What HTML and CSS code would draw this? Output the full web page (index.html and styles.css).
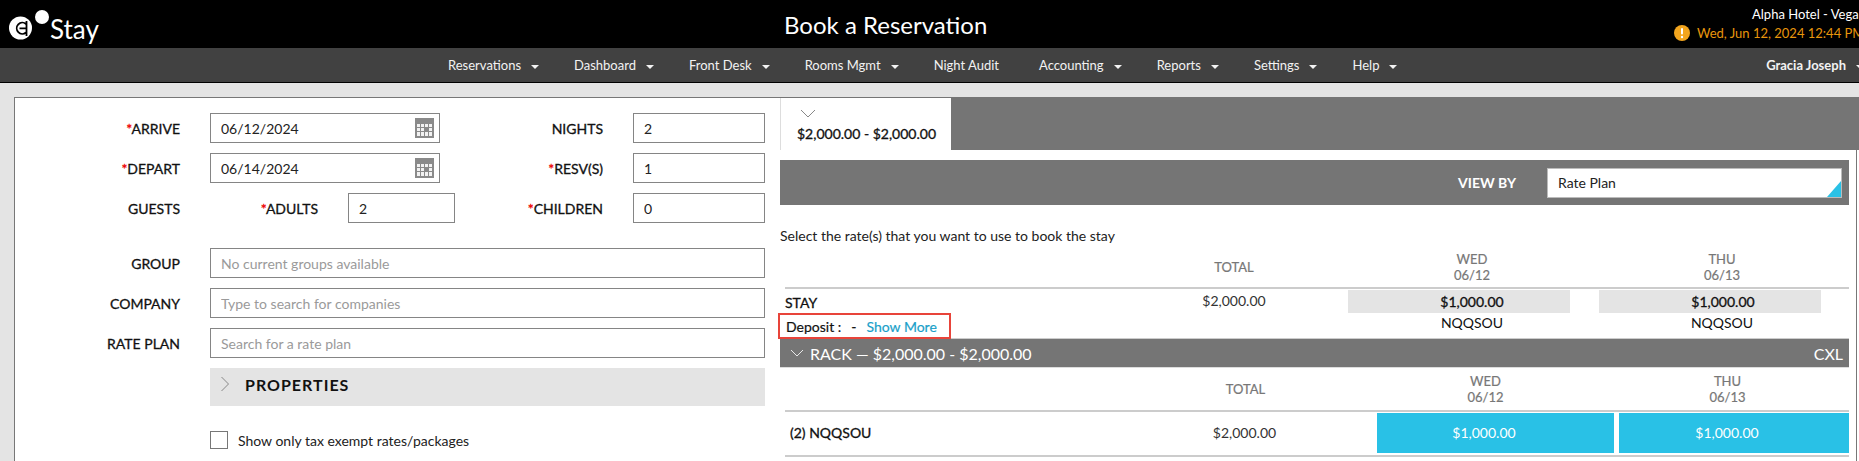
FILE: index.html
```html
<!DOCTYPE html>
<html>
<head>
    <meta charset="utf-8">
    <title>Book a Reservation</title>
    <link rel="stylesheet" href="styles.css">
</head>
<body>
    <svg class="defs" width="0" height="0">
        <symbol id="cal" viewBox="0 0 19 20">
            <rect width="19" height="20" fill="#8a8a8a"/>
            <g fill="#f2f2f2">
                <rect x="2" y="6" width="3" height="3"/><rect x="6" y="6" width="3" height="3"/><rect x="10" y="6" width="3" height="3"/><rect x="14" y="6" width="3" height="3"/>
                <rect x="2" y="10" width="3" height="3"/><rect x="6" y="10" width="3" height="3"/><rect x="14" y="10" width="3" height="3"/>
                <rect x="2" y="14" width="3" height="4"/><rect x="6" y="14" width="3" height="4"/><rect x="10" y="14" width="3" height="4"/><rect x="14" y="14" width="3" height="4"/>
            </g>
        </symbol>
    </svg>

    <header class="top">
        <div class="logo">
            <svg width="50" height="40" viewBox="0 0 50 40">
                <circle cx="20.5" cy="24" r="11.5" fill="#fff"/>
                <circle cx="42" cy="13" r="7" fill="#fff"/>
                <path d="M26 20 A5.6 5.6 0 1 0 26 28.5 M26.5 17 V32 M19.5 24.3 H26" fill="none" stroke="#000" stroke-width="1.8"/>
            </svg>
            <span class="brand">Stay</span>
        </div>
        <h1>Book a Reservation</h1>
        <div class="hotel">
            <div class="hotel-name">Alpha Hotel - Vega</div>
            <div class="hotel-date">
                <svg width="16" height="16" viewBox="0 0 16 16">
                    <circle cx="8" cy="8" r="8" fill="#f2a51e"/>
                    <rect x="7" y="3" width="2" height="6.5" rx="1" fill="#fff"/>
                    <circle cx="8" cy="12" r="1.2" fill="#fff"/>
                </svg>
                <span>Wed, Jun 12, 2024 12:44 PM</span>
            </div>
        </div>
    </header>

    <nav class="menu">
        <a class="drop">Reservations</a>
        <a class="drop">Dashboard</a>
        <a class="drop">Front Desk</a>
        <a class="drop">Rooms Mgmt</a>
        <a class="audit">Night Audit</a>
        <a class="drop">Accounting</a>
        <a class="drop">Reports</a>
        <a class="drop">Settings</a>
        <a class="drop">Help</a>
        <a class="drop user">Gracia Joseph</a>
    </nav>

    <main class="page">
        <section class="search">
            <div class="row">
                <label class="lbl req">ARRIVE</label>
                <div class="field f-date"><input value="06/12/2024"><svg class="cal"><use href="#cal"/></svg></div>
                <label class="lbl lbl-mid">NIGHTS</label>
                <div class="field f-small"><input value="2"></div>
            </div>
            <div class="row">
                <label class="lbl req">DEPART</label>
                <div class="field f-date"><input value="06/14/2024"><svg class="cal"><use href="#cal"/></svg></div>
                <label class="lbl lbl-mid req">RESV(S)</label>
                <div class="field f-small"><input value="1"></div>
            </div>
            <div class="row row-guests">
                <label class="lbl">GUESTS</label>
                <label class="lbl lbl-adults req">ADULTS</label>
                <div class="field f-adults"><input value="2"></div>
                <label class="lbl lbl-children req">CHILDREN</label>
                <div class="field f-small"><input value="0"></div>
            </div>
            <div class="row">
                <label class="lbl">GROUP</label>
                <div class="field f-wide"><input placeholder="No current groups available"></div>
            </div>
            <div class="row">
                <label class="lbl">COMPANY</label>
                <div class="field f-wide"><input placeholder="Type to search for companies"></div>
            </div>
            <div class="row">
                <label class="lbl">RATE PLAN</label>
                <div class="field f-wide"><input placeholder="Search for a rate plan"></div>
            </div>
            <div class="props">
                <svg width="10" height="16" viewBox="0 0 10 16"><path d="M1.5 1 L8.5 8 L1.5 15" fill="none" stroke="#888" stroke-width="1"/></svg>
                <span>PROPERTIES</span>
            </div>
            <div class="exempt">
                <span class="check"></span>
                <span>Show only tax exempt rates/packages</span>
            </div>
        </section>

        <section class="rates">
            <div class="tabs">
                <div class="tab">
                    <svg width="16" height="9" viewBox="0 0 16 9"><path d="M1 1 L8 8 L15 1" fill="none" stroke="#888" stroke-width="1"/></svg>
                    <div>$2,000.00 - $2,000.00</div>
                </div>
            </div>
            <div class="pane">
                <div class="viewby">
                    <span>VIEW BY</span>
                    <div class="select">Rate Plan</div>
                </div>
                <div class="hint">Select the rate(s) that you want to use to book the stay</div>

                <div class="grid stay-head">
                    <div></div>
                    <div class="th">TOTAL</div>
                    <div class="th">WED<br>06/12</div>
                    <div class="th">THU<br>06/13</div>
                </div>
                <div class="grid stay-body">
                    <div class="stay-name">
                        <div class="stay-title">STAY</div>
                        <div class="deposit">Deposit :<i>-</i><a>Show More</a></div>
                    </div>
                    <div class="total">$2,000.00</div>
                    <div class="day">
                        <div class="price">$1,000.00</div>
                        <div class="code">NQQSOU</div>
                    </div>
                    <div class="day day-2">
                        <div class="price">$1,000.00</div>
                        <div class="code">NQQSOU</div>
                    </div>
                </div>

                <div class="rack">
                    <svg width="14" height="8" viewBox="0 0 14 8"><path d="M1 1 L7 7 L13 1" fill="none" stroke="#e8e8e8" stroke-width="1"/></svg>
                    <span>RACK — $2,000.00 - $2,000.00</span>
                    <span class="cxl">CXL</span>
                </div>

                <div class="grid2 rack-head">
                    <div></div>
                    <div class="th th-total">TOTAL</div>
                    <div class="th col-a">WED<br>06/12</div>
                    <div class="th col-b">THU<br>06/13</div>
                </div>
                <div class="grid2 rack-row">
                    <div class="rate-name">(2) NQQSOU</div>
                    <div class="total">$2,000.00</div>
                    <div class="btn col-a">$1,000.00</div>
                    <div class="btn col-b">$1,000.00</div>
                </div>
            </div>
        </section>
    </main>
</body>
</html>
```

FILE: styles.css
```css
* {
    box-sizing: border-box;
}

html, body {
    height: 461px;
    overflow: hidden;
}

body {
    margin: 0;
    background-color: #e4e4e4;
    font-family: Lato, "Open Sans", sans-serif;
    font-size: 14px;
    color: #111;
}

.defs {
    position: absolute;
}

/* top bar */
.top {
    display: flex;
    align-items: center;
    height: 48px;
    background-color: #000;
    color: #fff;
}

.logo {
    flex: 0 0 784px;
    display: flex;
    align-items: center;
    height: 48px;
}

.logo svg {
    display: block;
}

.brand {
    font-size: 26px;
    margin-top: 9px;
}

.top h1 {
    margin: 0;
    font-size: 24px;
    font-weight: 400;
}

.hotel {
    margin-left: auto;
    width: 185px;
    overflow: hidden;
    white-space: nowrap;
    font-size: 13px;
}

.hotel-name {
    padding-left: 78px;
    line-height: 18px;
}

.hotel-date {
    display: flex;
    align-items: center;
    gap: 7px;
    line-height: 20px;
    color: #e8960c;
}

.hotel-date svg {
    flex: none;
}

/* menu */
.menu {
    display: flex;
    align-items: center;
    gap: 35px;
    height: 35px;
    padding-left: 448px;
    background-color: #414141;
    border-bottom: 1px solid #000;
    color: #f2f2f2;
    font-size: 13px;
    white-space: nowrap;
}

.drop::after {
    content: "";
    display: inline-block;
    margin-left: 10px;
    vertical-align: 1px;
    border-top: 4px solid #f2f2f2;
    border-left: 4px solid transparent;
    border-right: 4px solid transparent;
}

.audit {
    margin-right: 5px;
}

.user {
    margin-left: auto;
    margin-right: -5px;
    font-weight: 700;
}

/* page */
.page {
    display: flex;
    margin: 14px 0 0 14px;
    height: 364px;
}

.search {
    flex: 0 0 766px;
    padding-top: 15px;
    background-color: #fff;
    border-top: 1px solid #777;
    border-left: 1px solid #777;
}

.row {
    display: flex;
    align-items: center;
    margin-bottom: 10px;
}

.row-guests {
    margin-bottom: 25px;
}

.lbl {
    flex: 0 0 165px;
    margin-right: 30px;
    text-align: right;
    -webkit-text-stroke: 0.3px #111;
}

.req::before {
    content: "*";
    color: #e00;
    -webkit-text-stroke: 0.3px #e00;
}

.lbl-mid {
    flex-basis: 163px;
}

.lbl-adults {
    flex-basis: 108px;
}

.lbl-children {
    flex-basis: 148px;
}

.field {
    display: flex;
    align-items: center;
    height: 30px;
    background-color: #fff;
    border: 1px solid #858585;
}

.field input {
    flex: 1;
    min-width: 0;
    height: 100%;
    padding: 0 10px;
    border: 0;
    outline: 0;
    background: transparent;
    font-family: inherit;
    font-size: 14px;
    color: #222;
}

.field input::placeholder {
    color: #9a9a9a;
    opacity: 1;
}

.f-date {
    width: 230px;
}

.f-small {
    width: 132px;
}

.f-adults {
    width: 107px;
}

.f-wide {
    width: 555px;
}

.cal {
    flex: 0 0 19px;
    width: 19px;
    height: 20px;
    margin-right: 5px;
}

.props {
    display: flex;
    align-items: center;
    gap: 15px;
    width: 555px;
    height: 38px;
    margin-left: 195px;
    padding: 0 0 6px 10px;
    background-color: #e4e4e4;
    font-size: 16px;
    font-weight: 700;
    letter-spacing: 1px;
}

.exempt {
    display: flex;
    align-items: center;
    gap: 10px;
    margin: 25px 0 0 195px;
    color: #222;
}

.check {
    width: 18px;
    height: 18px;
    border: 1px solid #777;
}

/* rate side */
.rates {
    flex: 1;
    background-color: #fff;
    min-width: 0;
}

.tabs {
    height: 53px;
    padding-top: 1px;
    background-color: #757575;
}

.tab {
    width: 171px;
    height: 52px;
    padding: 11px 0 0 16px;
    background-color: #fff;
    border-left: 1px solid #ddd;
    -webkit-text-stroke: 0.3px #111;
}

.tab svg {
    display: block;
    margin: 0 0 7px 3px;
}

.pane {
    height: 311px;
    margin-right: 2px;
    padding: 10px 7px 0 0;
    border-right: 1px solid #777;
}

.viewby {
    display: flex;
    align-items: center;
    justify-content: flex-end;
    height: 45px;
    padding-right: 7px;
    background-color: #757575;
    color: #fff;
    font-weight: 700;
}

.select {
    position: relative;
    width: 295px;
    height: 30px;
    margin-left: 31px;
    padding-left: 10px;
    background-color: #fff;
    border: 1px solid #bbb;
    color: #222;
    font-weight: 400;
    line-height: 28px;
}

.select::after {
    content: "";
    position: absolute;
    right: 0;
    bottom: 0;
    border-bottom: 16px solid #29c1e6;
    border-left: 14px solid transparent;
}

.hint {
    margin-top: 21px;
    line-height: 20px;
    color: #222;
}

.grid {
    display: grid;
    grid-template-columns: 335px 228px 248px 252px;
    margin-left: 5px;
}

.grid2 {
    display: grid;
    grid-template-columns: 345px 247px 240px 232px;
    margin-left: 5px;
}

.th {
    text-align: center;
    font-size: 13px;
    line-height: 16px;
    color: #777;
    align-self: center;
    -webkit-text-stroke: 0.2px #777;
}

.stay-head {
    height: 43px;
    border-bottom: 2px solid #ccc;
}

.stay-body {
    height: 50px;
    border-bottom: 1px solid #ccc;
}

.stay-title {
    height: 24px;
    padding-top: 4px;
    line-height: 20px;
    -webkit-text-stroke: 0.3px #111;
}

.deposit {
    width: 173px;
    height: 26px;
    margin-left: -7px;
    padding-left: 6px;
    border: 2px solid #e8443a;
    line-height: 24px;
    white-space: nowrap;
    -webkit-text-stroke: 0.2px #111;
}

.deposit i {
    margin: 0 10px;
    font-style: normal;
}

.deposit a {
    color: #1a9fc9;
    -webkit-text-stroke: 0.2px #1a9fc9;
}

.total {
    padding-top: 2px;
    text-align: center;
    line-height: 20px;
    color: #333;
}

.price {
    height: 23px;
    margin: 1px 26px 0 0;
    padding-left: 26px;
    background-color: #e4e4e4;
    text-align: center;
    line-height: 23px;
    -webkit-text-stroke: 0.3px #111;
}

.day-2 .price {
    margin: 1px 27px 0 3px;
}

.code {
    text-align: center;
    line-height: 19px;
}

.rack {
    display: flex;
    align-items: center;
    height: 29px;
    padding: 0 6px 0 10px;
    background-color: #757575;
    border-bottom: 1px solid #ddd;
    color: #fff;
    font-size: 16px;
}

.rack svg {
    margin-right: 6px;
}

.cxl {
    margin-left: auto;
}

.rack-head {
    height: 44px;
    border-bottom: 2px solid #ccc;
}

.th-total {
    padding-right: 16px;
}

.rack-head .col-a {
    padding-right: 23px;
}

.rack-head .col-b {
    padding-right: 11px;
}

.rack-row {
    height: 45px;
    padding-top: 1px;
    border-bottom: 2px solid #ccc;
}

.rate-name {
    padding-left: 5px;
    line-height: 40px;
    -webkit-text-stroke: 0.3px #111;
}

.rack-row .total {
    padding: 0 18px 0 0;
    line-height: 40px;
}

.btn {
    height: 40px;
    background-color: #29c1e6;
    color: #fff;
    text-align: center;
    line-height: 40px;
}

.btn.col-a {
    margin-right: 3px;
    padding-right: 23px;
}

.btn.col-b {
    margin-left: 2px;
    padding-right: 14px;
}
```
